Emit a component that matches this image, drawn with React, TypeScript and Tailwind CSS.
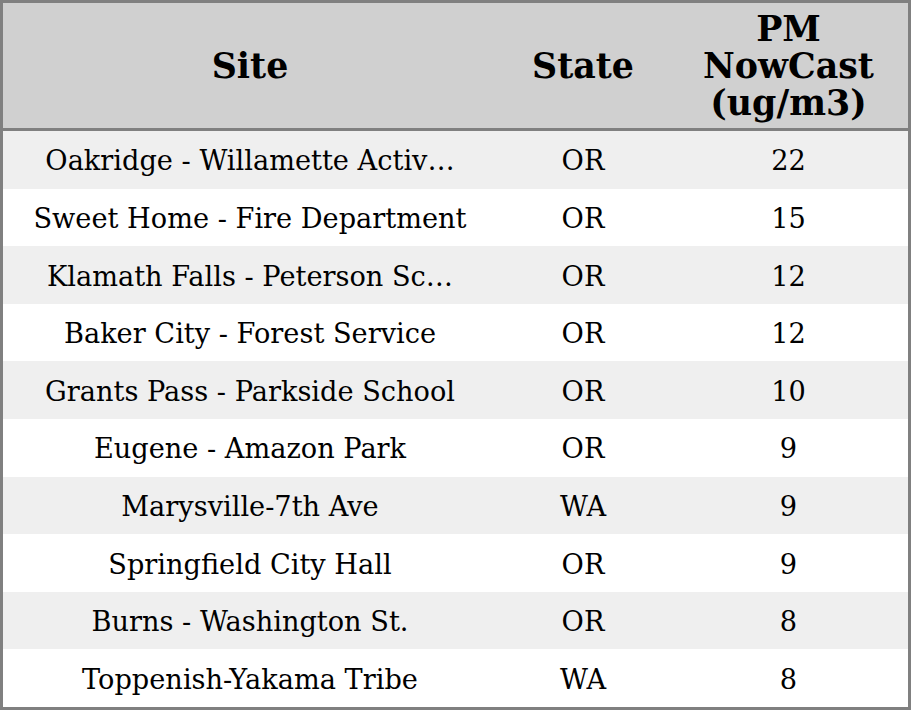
import React from 'react';

interface SiteRow {
  site: string;
  state: string;
  pm: number;
}

const rows: SiteRow[] = [
  { site: 'Oakridge - Willamette Activ…', state: 'OR', pm: 22 },
  { site: 'Sweet Home - Fire Department', state: 'OR', pm: 15 },
  { site: 'Klamath Falls - Peterson Sc…', state: 'OR', pm: 12 },
  { site: 'Baker City - Forest Service', state: 'OR', pm: 12 },
  { site: 'Grants Pass - Parkside School', state: 'OR', pm: 10 },
  { site: 'Eugene - Amazon Park', state: 'OR', pm: 9 },
  { site: 'Marysville-7th Ave', state: 'WA', pm: 9 },
  { site: 'Springfield City Hall', state: 'OR', pm: 9 },
  { site: 'Burns - Washington St.', state: 'OR', pm: 8 },
  { site: 'Toppenish-Yakama Tribe', state: 'WA', pm: 8 },
];

export default function App() {
  return (
    <div className="w-[912px] h-[711px] bg-white font-['DejaVu_Serif',serif] text-black">
      <div className="w-[911px] h-[710px] border-[3px] border-[#808080] flex flex-col">
        {/* Header */}
        <div className="h-[128px] shrink-0 flex bg-[#d0d0d0] border-b-[3px] border-[#808080] font-bold text-[34.8px] leading-[37px]">
          <div className="w-[494px] flex items-center justify-center pb-[1px]">Site</div>
          <div className="w-[172px] flex items-center justify-center pb-[1px]">State</div>
          <div className="flex-1 flex items-center justify-center text-center pb-[1px]">
            PM
            <br />
            NowCast
            <br />
            (ug/m3)
          </div>
        </div>

        {/* Rows */}
        <div className="flex-1 flex flex-col text-[27.2px]">
          {rows.map((r, i) => (
            <div
              key={r.site}
              className={`flex-1 flex items-center pt-[4px] ${i % 2 === 0 ? 'bg-[#efefef]' : 'bg-white'}`}
            >
              <div className="w-[494px] text-center whitespace-nowrap">{r.site}</div>
              <div className="w-[172px] text-center">{r.state}</div>
              <div className="flex-1 text-center">{r.pm}</div>
            </div>
          ))}
        </div>
      </div>
    </div>
  );
}
